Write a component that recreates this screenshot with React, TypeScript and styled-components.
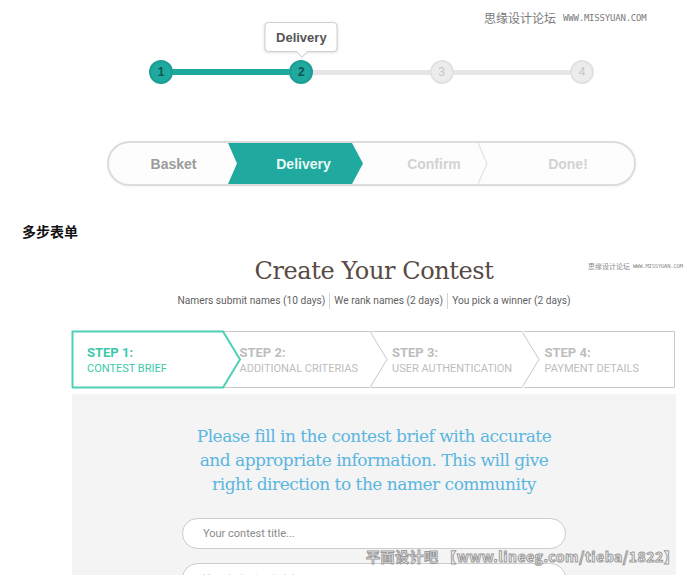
import React from 'react'
import styled, { createGlobalStyle } from 'styled-components'

const GlobalStyle = createGlobalStyle`
  html, body {
    margin: 0;
    padding: 0;
    background: #ffffff;
    overflow: hidden;
  }
  * {
    box-sizing: border-box;
  }
`

const colors = {
  TEAL: '#1fa99f',
  TEAL_DARK: '#0f5550',
  MINT: '#3ec8aa',
  LINE_GREY: '#e6e6e6',
  BORDER_GREY: '#c9c9c9',
  TEXT_GREY: '#bdbdbd',
  BLUE: '#5bb6df',
  BROWN: '#584a44',
}

const Page = styled.div`
  position: relative;
  width: 700px;
  height: 575px;
  overflow: hidden;
  display: flex;
  flex-direction: column;
  font-family: 'Liberation Sans', Arial, sans-serif;

  & > * {
    flex-shrink: 0;
  }
`

const Watermark = styled.div`
  position: absolute;
  top: 12px;
  left: 484px;
  display: flex;
  align-items: center;
  gap: 7px;
  color: #7a7a7a;
  white-space: nowrap;
`

const WatermarkCjk = styled.span<{ $size: number }>`
  font-family: 'Noto Sans CJK SC', sans-serif;
  font-size: ${(p) => p.$size}px;
  line-height: 1;
  white-space: nowrap;
`

const WatermarkUrl = styled.span<{ $size: number }>`
  font-family: 'DejaVu Sans Mono', monospace;
  font-size: ${(p) => p.$size}px;
  line-height: 1;
  letter-spacing: -0.2px;
  white-space: nowrap;
`

const Stepper = styled.div`
  display: flex;
  align-items: center;
  width: 445px;
  margin: 60px 0 0 149px;
`

const Dot = styled.div<{ $done: boolean }>`
  position: relative;
  flex: 0 0 24px;
  height: 24px;
  border-radius: 50%;
  display: flex;
  align-items: center;
  justify-content: center;
  font-size: 12px;
  font-weight: ${(p) => (p.$done ? 700 : 400)};
  background: ${(p) => (p.$done ? colors.TEAL : '#ececec')};
  border: 2px solid ${(p) => (p.$done ? '#1c9d94' : '#e2e2e2')};
  color: ${(p) => (p.$done ? colors.TEAL_DARK : '#c6c6c6')};
`

const Track = styled.div<{ $done: boolean }>`
  flex: 1;
  height: ${(p) => (p.$done ? 6 : 5)}px;
  margin: 0 -2px;
  background: ${(p) => (p.$done ? colors.TEAL : colors.LINE_GREY)};
`

const Tooltip = styled.div`
  position: absolute;
  bottom: calc(100% + 10px);
  left: 50%;
  transform: translateX(-50%);
  width: 73px;
  height: 30px;
  display: flex;
  align-items: center;
  justify-content: center;
  background: #ffffff;
  border: 1px solid #cfcfcf;
  border-radius: 4px;
  box-shadow: 0 1px 3px rgba(0, 0, 0, 0.12);
  color: #555555;
  font-size: 13px;
  font-weight: 700;

  &::after {
    content: '';
    position: absolute;
    left: 50%;
    bottom: -5px;
    width: 8px;
    height: 8px;
    margin-left: -4px;
    background: #ffffff;
    border-right: 1px solid #cfcfcf;
    border-bottom: 1px solid #cfcfcf;
    transform: rotate(45deg);
  }
`

const Crumbs = styled.div`
  display: flex;
  width: 529px;
  height: 45px;
  margin: 57px 0 0 107px;
  border: 2px solid #dcdcdc;
  border-radius: 23px;
  overflow: hidden;
  background: #fdfdfd;
  box-shadow: 0 1px 2px rgba(0, 0, 0, 0.05);
`

const Crumb = styled.div<{ $width: number; $pad: number; $tone: 'done' | 'active' | 'todo' }>`
  position: relative;
  flex: 0 0 ${(p) => p.$width}px;
  display: flex;
  align-items: center;
  justify-content: center;
  padding-left: ${(p) => p.$pad}px;
  font-size: 14px;
  font-weight: 700;
  color: ${(p) => (p.$tone === 'done' ? '#9b9b9b' : p.$tone === 'active' ? '#e8f8f6' : '#d2d2d2')};
  ${(p) =>
    p.$tone === 'active' &&
    `
    background: ${colors.TEAL};
    margin-right: -11px;
    clip-path: polygon(0 0, calc(100% - 11px) 0, 100% 50%, calc(100% - 11px) 100%, 0 100%, 9px 50%);
    z-index: 1;
  `}
`

const CrumbDivider = styled.svg`
  position: absolute;
  top: 0;
  right: -10px;
  width: 10px;
  height: 100%;
`

const SectionTitle = styled.div`
  margin: 36px 0 0 22px;
  font-family: 'Noto Sans CJK SC', sans-serif;
  font-size: 14px;
  font-weight: 700;
  line-height: 18px;
  color: #111111;
`

const Contest = styled.section`
  position: relative;
  width: 604px;
  margin: 15px 0 0 72px;
  display: flex;
  flex-direction: column;
  align-items: center;
`

const SmallMark = styled.div`
  position: absolute;
  top: 8px;
  left: 516px;
  display: flex;
  align-items: center;
  gap: 3px;
  color: #8a8a8a;
  white-space: nowrap;
`

const Title = styled.h1`
  margin: 0;
  font-family: 'DejaVu Serif', serif;
  font-size: 24px;
  font-weight: 400;
  line-height: 32px;
  letter-spacing: -0.4px;
  color: ${colors.BROWN};
`

const Timeline = styled.div`
  display: flex;
  align-items: center;
  margin-top: 6px;
  font-family: Roboto, sans-serif;
  font-size: 10.2px;
  line-height: 16px;
  color: #5f5f5f;
`

const Phase = styled.span<{ $first?: boolean }>`
  padding: 0 4px;
  ${(p) => !p.$first && `border-left: 1px solid #d4d4d4;`}
`

const StepsBar = styled.div`
  display: flex;
  width: 100%;
  height: 57px;
  margin-top: 22px;
`

const Step = styled.div<{ $active: boolean; $pad: number; $index: number }>`
  position: relative;
  flex: 1;
  display: flex;
  flex-direction: column;
  justify-content: center;
  padding: 2px 0 0 ${(p) => p.$pad}px;
  font-family: Roboto, sans-serif;
  color: ${(p) => (p.$active ? colors.MINT : colors.TEXT_GREY)};
  z-index: ${(p) => 10 - p.$index};
`

const StepOutline = styled.svg`
  position: absolute;
  top: 0;
  left: 0;
  overflow: visible;
  pointer-events: none;
`

const StepNumber = styled.div`
  position: relative;
  font-size: 13px;
  font-weight: 700;
  line-height: 16px;
`

const StepName = styled.div`
  position: relative;
  font-size: 11px;
  line-height: 16px;
`

const Panel = styled.div`
  width: 100%;
  margin-top: 6px;
  padding: 30px 0 20px;
  display: flex;
  flex-direction: column;
  align-items: center;
  background: #f4f4f4;
`

const Lead = styled.p`
  margin: 0;
  font-family: 'DejaVu Serif', serif;
  font-size: 17px;
  line-height: 24px;
  letter-spacing: -0.5px;
  text-align: center;
  color: ${colors.BLUE};
`

const Field = styled.div<{ $gap: number }>`
  flex-shrink: 0;
  width: 384px;
  height: 31px;
  margin-top: ${(p) => p.$gap}px;
  display: flex;
  align-items: center;
  padding-left: 20px;
  background: #ffffff;
  border: 1px solid #cccccc;
  border-radius: 16px;
  font-family: Roboto, sans-serif;
  font-size: 11px;
`

const Placeholder = styled.span<{ $tint?: string }>`
  color: ${(p) => p.$tint ?? '#8a8a8a'};
`

const StampMark = styled.div`
  position: absolute;
  left: 366px;
  top: 546px;
  font-family: 'Noto Sans CJK SC', 'DejaVu Sans', sans-serif;
  font-size: 14px;
  font-weight: 700;
  letter-spacing: 0.5px;
  color: #ffffff;
  -webkit-text-stroke: 1px #9a9a9a;
  white-space: nowrap;
`

const crumbs = [
  { label: 'Basket', width: 119, pad: 10, tone: 'done' as const },
  { label: 'Delivery', width: 135, pad: 16, tone: 'active' as const },
  { label: 'Confirm', width: 126, pad: 38, tone: 'todo' as const, divider: true },
  { label: 'Done!', width: 156, pad: 24, tone: 'todo' as const },
]

const steps = [
  { number: 'STEP 1:', name: 'CONTEST BRIEF' },
  { number: 'STEP 2:', name: 'ADDITIONAL CRITERIAS' },
  { number: 'STEP 3:', name: 'USER AUTHENTICATION' },
  { number: 'STEP 4:', name: 'PAYMENT DETAILS' },
]

const STEP_W = 151
const STEP_H = 57
const TIP = 17

const outline = (index: number, last: boolean) => {
  const left = index === 0 ? `M0.5,${STEP_H - 0.5} L0.5,0.5` : `M0,0.5`
  if (last) return `M0,0.5 L${STEP_W - 0.5},0.5 L${STEP_W - 0.5},${STEP_H - 0.5} L0,${STEP_H - 0.5}`
  return `${left} L${STEP_W},0.5 L${STEP_W + TIP},${STEP_H / 2} L${STEP_W},${STEP_H - 0.5} L0,${STEP_H - 0.5}`
}

const App: React.FC = () => {
  return (
    <Page>
      <GlobalStyle />
      <Watermark>
        <WatermarkCjk $size={12}>思缘设计论坛</WatermarkCjk>
        <WatermarkUrl $size={9}>WWW.MISSYUAN.COM</WatermarkUrl>
      </Watermark>

      <Stepper>
        <Dot $done>1</Dot>
        <Track $done />
        <Dot $done>
          2<Tooltip>Delivery</Tooltip>
        </Dot>
        <Track $done={false} />
        <Dot $done={false}>3</Dot>
        <Track $done={false} />
        <Dot $done={false}>4</Dot>
      </Stepper>

      <Crumbs>
        {crumbs.map((c) => (
          <Crumb key={c.label} $width={c.width} $pad={c.pad} $tone={c.tone}>
            {c.label}
            {c.divider && (
              <CrumbDivider viewBox='0 0 10 41' preserveAspectRatio='none'>
                <polyline points='0,0 9,20.5 0,41' fill='none' stroke='#e2e2e2' strokeWidth='1.2' />
              </CrumbDivider>
            )}
          </Crumb>
        ))}
      </Crumbs>

      <SectionTitle>多步表单</SectionTitle>

      <Contest>
        <SmallMark>
          <WatermarkCjk $size={7}>思缘设计论坛</WatermarkCjk>
          <WatermarkUrl $size={5.5}>WWW.MISSYUAN.COM</WatermarkUrl>
        </SmallMark>
        <Title>Create Your Contest</Title>
        <Timeline>
          <Phase $first>Namers submit names (10 days)</Phase>
          <Phase>We rank names (2 days)</Phase>
          <Phase>You pick a winner (2 days)</Phase>
        </Timeline>

        <StepsBar>
          {steps.map((s, i) => (
            <Step key={s.number} $active={i === 0} $pad={i === 0 ? 15 : 21} $index={i}>
              <StepOutline width={STEP_W} height={STEP_H}>
                <path
                  d={outline(i, i === steps.length - 1)}
                  fill={i === 0 ? '#ffffff' : 'none'}
                  stroke={i === 0 ? '#4fd0b6' : colors.BORDER_GREY}
                  strokeWidth={i === 0 ? 2 : 1}
                />
              </StepOutline>
              <StepNumber>{s.number}</StepNumber>
              <StepName>{s.name}</StepName>
            </Step>
          ))}
        </StepsBar>

        <Panel>
          <Lead>
            Please fill in the contest brief with accurate
            <br />
            and appropriate information. This will give
            <br />
            right direction to the namer community
          </Lead>
          <Field $gap={22}>
            <Placeholder>Your contest title...</Placeholder>
          </Field>
          <Field $gap={14}>
            <Placeholder $tint='#a9d7ee'>Your industry / niche...</Placeholder>
          </Field>
        </Panel>
      </Contest>

      <StampMark>平面设计吧 【www.lineeg.com/tieba/1822】</StampMark>
    </Page>
  )
}

export default App
